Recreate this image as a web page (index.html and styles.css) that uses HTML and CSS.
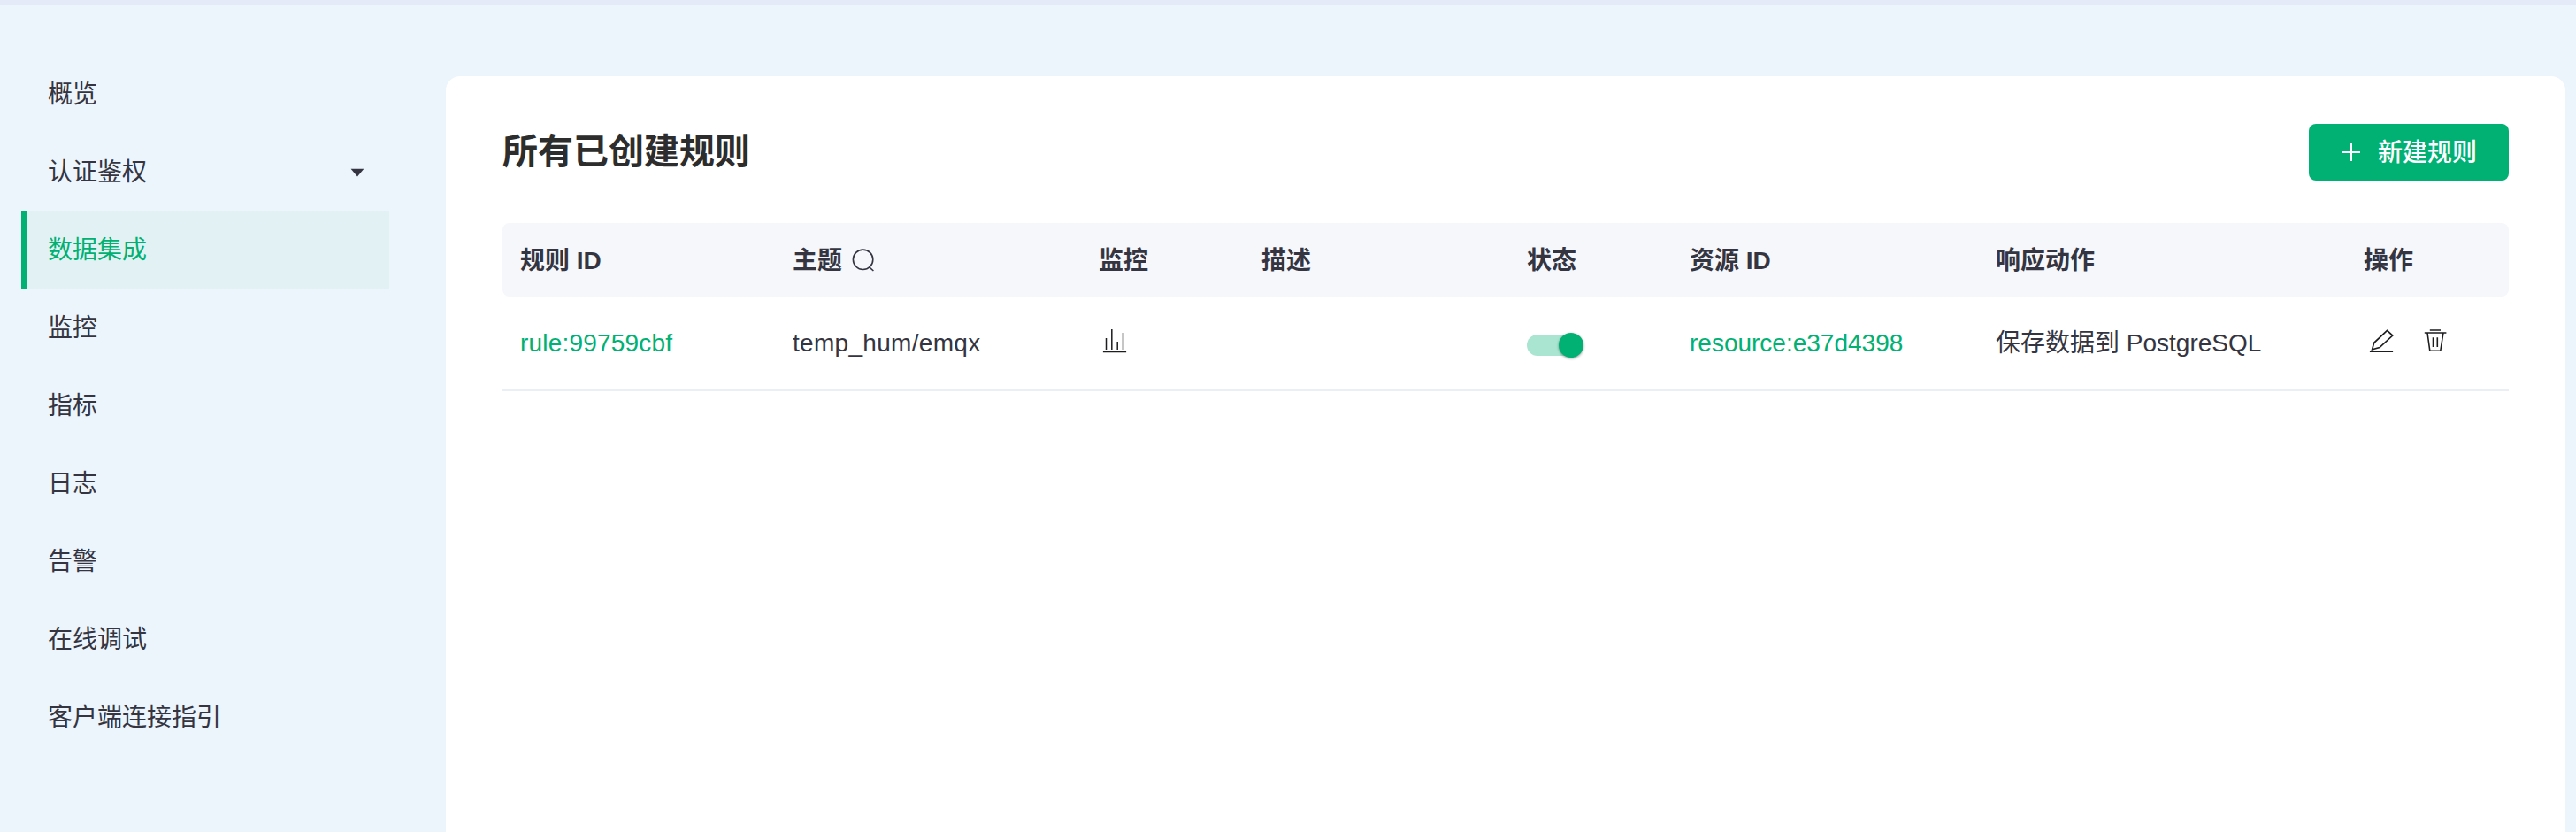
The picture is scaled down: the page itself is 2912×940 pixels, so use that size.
FILE: index.html
```html
<!DOCTYPE html>
<html lang="zh-CN">
<head>
<meta charset="utf-8">
<title>数据集成</title>
<link rel="stylesheet" href="styles.css">
</head>
<body>
<div class="layout">
  <nav class="sidebar">
    <a class="nav-item">概览</a>
    <a class="nav-item">认证鉴权
      <svg class="caret" width="16" height="10" viewBox="0 0 16 10"><path d="M0.6 0.8H15.4L8 9.6Z" fill="#343541"/></svg>
    </a>
    <a class="nav-item active">数据集成</a>
    <a class="nav-item">监控</a>
    <a class="nav-item">指标</a>
    <a class="nav-item">日志</a>
    <a class="nav-item">告警</a>
    <a class="nav-item">在线调试</a>
    <a class="nav-item">客户端连接指引</a>
  </nav>
  <main class="card">
    <header class="card-head">
      <h1 class="title">所有已创建规则</h1>
      <button class="create">
        <svg width="20" height="20" viewBox="0 0 20 20"><path d="M10 0V20M0 10H20" stroke="#fff" stroke-width="2"/></svg>
        <span class="create-label">新建规则</span>
      </button>
    </header>
    <table class="rules">
      <colgroup>
        <col class="c-id"><col class="c-topic"><col class="c-small"><col class="c-desc"><col class="c-small"><col class="c-topic"><col class="c-action"><col class="c-small">
      </colgroup>
      <thead>
        <tr>
          <th>规则 ID</th>
          <th><span class="th-search">主题
            <svg class="search" width="26" height="26" viewBox="0 0 26 26" fill="none" stroke="#343541" stroke-width="1.6"><circle cx="12.6" cy="12.3" r="11.2"/><path d="M19.4 20.6L24.4 25"/></svg></span></th>
          <th>监控</th>
          <th>描述</th>
          <th>状态</th>
          <th>资源 ID</th>
          <th>响应动作</th>
          <th>操作</th>
        </tr>
      </thead>
      <tbody>
        <tr>
          <td><a class="link rule-id">rule:99759cbf</a></td>
          <td class="topic">temp_hum/emqx</td>
          <td><svg class="icon chart" width="28" height="28" viewBox="0 0 28 28" fill="none" stroke="#1d1d1f" stroke-width="1.5"><path d="M0.9 26.5H27.1M4.5 11V24M10.8 1V24M17.2 15V24M23.5 5V24"/></svg></td>
          <td></td>
          <td><span class="switch"><span class="knob"></span></span></td>
          <td><a class="link">resource:e37d4398</a></td>
          <td>保存数据到 PostgreSQL</td>
          <td><span class="ops">
            <svg class="icon" width="28" height="28" viewBox="0 0 28 28" fill="none" stroke="#1d1d1f" stroke-width="1.7"><path d="M0.9 26.1H27.1M20.5 2.3L26.7 8L12 21.6L3.6 23.7L5.7 16.3Z"/></svg>
            <svg class="icon" width="28" height="28" viewBox="0 0 28 28" fill="none" stroke="#1d1d1f" stroke-width="1.6"><path d="M7.8 2H20M1.8 5H26.4M5 5L7.8 25.3H19.8L23 5M11.5 10.3V21M16.3 10.3V21"/></svg>
          </span></td>
        </tr>
      </tbody>
    </table>
  </main>
</div>
</body>
</html>
```

FILE: styles.css
```css
* { box-sizing: border-box; }
body {
  margin: 0;
  height: 940px;
  overflow: hidden;
  border-top: 6px solid #e4eaf8;
  background: #ecf4fc;
  color: #343541;
  font-family: "Liberation Sans", "Noto Sans CJK SC", sans-serif;
  font-size: 28px;
  line-height: 32px;
}
.layout { display: flex; height: 934px; }
.sidebar { width: 504px; padding: 56px 64px 0 24px; }
.nav-item {
  display: flex;
  align-items: center;
  justify-content: space-between;
  height: 88px;
  padding: 2px 28px 0 24px;
  border-left: 6px solid transparent;
}
.nav-item.active { color: #00b173; background: #e1f1f4; border-color: #00b173; }
.card {
  width: 2396px;
  margin-top: 80px;
  padding: 54px 64px 0;
  background: #fff;
  border-radius: 16px 16px 0 0;
}
.card-head { display: flex; justify-content: space-between; align-items: center; height: 64px; margin-bottom: 48px; }
.title { margin: 0; padding-bottom: 3px; font-size: 40px; font-weight: 600; line-height: 60px; color: #2d2d2d; }
.create {
  display: flex;
  align-items: center;
  gap: 20px;
  width: 226px;
  height: 64px;
  padding: 0 0 0 38px;
  border: 0;
  border-radius: 8px;
  background: #00b173;
  color: #fff;
  font: 500 28px/32px "Liberation Sans", "Noto Sans CJK SC", sans-serif;
}
.create-label { padding-top: 2px; }
.rules { width: 2268px; table-layout: fixed; border-collapse: separate; border-spacing: 0; }
.c-id { width: 308px; }
.c-topic { width: 346px; }
.c-small { width: 184px; }
.c-desc { width: 300px; }
.c-action { width: 416px; }
.rules th, .rules td { padding: 0 0 0 20px; text-align: left; white-space: nowrap; }
.rules th { height: 83px; padding-top: 2px; background: #f5f7fb; font-weight: 600; }
.rules th:first-child { border-radius: 8px 0 0 8px; }
.rules th:last-child { border-radius: 0 8px 8px 0; }
.rules td { height: 107px; border-bottom: 2px solid #e9eff5; }
.th-search { display: flex; align-items: center; gap: 11px; }
.search { margin-bottom: 2px; }
.link { color: #00b173; }
.rule-id { letter-spacing: 0.2px; }
.topic { letter-spacing: 0.3px; }
.icon { display: block; position: relative; top: -3px; }
.chart { margin-left: 4px; }
.ops { display: flex; gap: 33px; padding-left: 6px; }
.switch { display: block; width: 62px; height: 24px; margin-top: 4px; border-radius: 12px; background: #aae5d1; }
.knob {
  display: block;
  width: 28px;
  height: 28px;
  border-radius: 50%;
  background: #00b173;
  box-shadow: 0 1px 3px rgba(0, 0, 0, .4);
  transform: translate(36px, -2px);
}
```
